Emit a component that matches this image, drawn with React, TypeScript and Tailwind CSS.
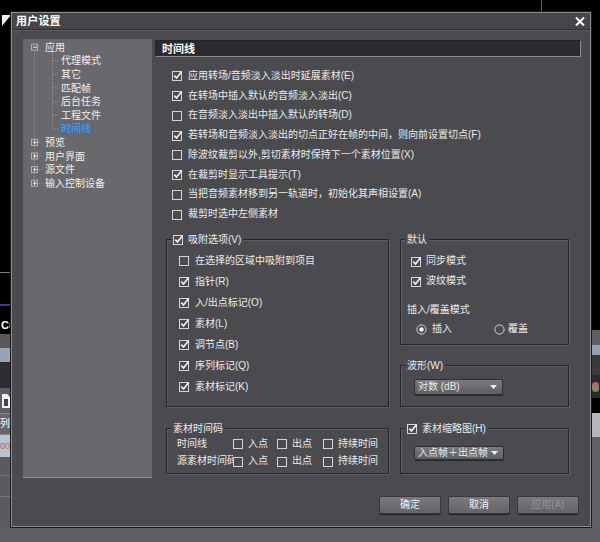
import React from "react";

function Check({ checked }: { checked: boolean }) {
  return (
    <svg width="11" height="11" viewBox="0 0 11 11" className="shrink-0">
      <rect x="0.5" y="1.5" width="9" height="9" fill="none" stroke="#d6d6d6" />
      {checked && (
        <path d="M2.3 5.6 L4.5 8.1 L9.7 1.4" fill="none" stroke="#f4f4f4" strokeWidth="1.6" />
      )}
    </svg>
  );
}

function Radio({ on }: { on: boolean }) {
  return (
    <svg width="11" height="11" viewBox="0 0 11 11" className="shrink-0">
      <circle cx="5.5" cy="5.5" r="4.6" fill="none" stroke="#d6d6d6" />
      {on && <circle cx="5.5" cy="5.5" r="2.2" fill="#f4f4f4" />}
    </svg>
  );
}

function Arrow() {
  return (
    <svg width="7" height="4" viewBox="0 0 7 4" className="shrink-0">
      <path d="M0 0 L7 0 L3.5 4 Z" fill="#f0f0f0" />
    </svg>
  );
}

function Row({ checked, text }: { checked: boolean; text: string }) {
  return (
    <div className="flex items-center h-[19.75px] gap-[5px] whitespace-nowrap">
      <Check checked={checked} />
      <span>{text}</span>
    </div>
  );
}

function Group({
  legend,
  className,
  children,
}: {
  legend: React.ReactNode;
  className: string;
  children?: React.ReactNode;
}) {
  return (
    <div
      className={`relative border border-[#262529] shadow-[inset_1px_1px_0_#5c5b60,1px_1px_0_#5c5b60] ${className}`}
    >
      <div className="absolute -top-[7px] left-[4px] px-[2px] bg-[#4b4a4f] flex items-center gap-[4px] h-[13px] whitespace-nowrap">
        {legend}
      </div>
      {children}
    </div>
  );
}

function Dropdown({ text, w, h }: { text: string; w: string; h: string }) {
  return (
    <div
      className={`flex items-center justify-between ${w} ${h} bg-gradient-to-b from-[#7b7a7f] to-[#5e5d62] border border-[#2f2e32] rounded-[2px] pl-[3px] pr-[5px] shadow-[0_1px_0_#2a292d] whitespace-nowrap`}
    >
      <span>{text}</span>
      <Arrow />
    </div>
  );
}

function Btn({ text, disabled }: { text: string; disabled?: boolean }) {
  return (
    <div
      className={`w-[62px] h-[18px] flex items-center justify-center rounded-[2px] border border-[#39383c] bg-gradient-to-b from-[#7a797e] to-[#646368] shadow-[0_1px_0_#1f1e22] ${
        disabled ? "text-[#939297]" : "text-[#f2f2f2]"
      }`}
    >
      {text}
    </div>
  );
}

function TreeLines() {
  const childYs = [61.3, 74.9, 88.5, 102.1, 115.7, 129.3];
  const rootPlus = [142.9, 156.5, 170.1, 183.7];
  const off = 39; // panel top
  const box = (cy: number, plus: boolean, k: string) => (
    <g key={k}>
      <rect x="8.5" y={cy - off - 3.5} width="6" height="6" fill="#69686d" stroke="#b4b4b8" />
      <line x1="10" y1={cy - off - 0.5} x2="14" y2={cy - off - 0.5} stroke="#e8e8e8" />
      {plus && <line x1="11.5" y1={cy - off - 2.5} x2="11.5" y2={cy - off + 1.5} stroke="#e8e8e8" />}
    </g>
  );
  return (
    <svg className="absolute left-0 top-0" width="129" height="200">
      <line x1="11.5" y1="13" x2="11.5" y2={183.7 - off} stroke="#909094" strokeDasharray="1 1" />
      <line x1="29.5" y1="14" x2="29.5" y2={129.3 - off} stroke="#909094" strokeDasharray="1 1" />
      {childYs.map((y, i) => (
        <line key={i} x1="30" y1={y - off - 0.5} x2="36" y2={y - off - 0.5} stroke="#909094" strokeDasharray="1 1" />
      ))}
      {rootPlus.map((y, i) => (
        <line key={"h" + i} x1="14" y1={y - off - 0.5} x2="19" y2={y - off - 0.5} stroke="#909094" strokeDasharray="1 1" />
      ))}
      {box(47.7, false, "a")}
      {rootPlus.map((y, i) => box(y, true, "b" + i))}
    </svg>
  );
}

export default function App() {
  const tree: { t: string; child?: boolean; sel?: boolean }[] = [
    { t: "应用" },
    { t: "代理模式", child: true },
    { t: "其它", child: true },
    { t: "匹配帧", child: true },
    { t: "后台任务", child: true },
    { t: "工程文件", child: true },
    { t: "时间线", child: true, sel: true },
    { t: "预览" },
    { t: "用户界面" },
    { t: "源文件" },
    { t: "输入控制设备" },
  ];

  return (
    <div className="relative w-[600px] h-[542px] bg-black overflow-hidden text-[10px] leading-[12px] text-[#ececec] font-['Liberation_Sans','Noto_Sans_CJK_SC',sans-serif]">
      {/* background application, left strip */}
      <div className="absolute left-0 top-0 w-[11px] h-[527px] flex flex-col">
        <div className="h-[272px] bg-black" />
        <div className="h-[1px] bg-[#7c7c80]" />
        <div className="h-[31px] bg-black" />
        <div className="h-[2px] bg-[#34408a]" />
        <div className="h-[28px] bg-black flex items-end pb-[3px] pl-[1px] text-[11px] font-bold text-white overflow-hidden">Cu</div>
        <div className="h-[14px] bg-[#58575c]" />
        <div className="h-[14px] bg-[#99a3b6]" />
        <div className="h-[26px] bg-[#2e2e31]" />
        <div className="h-[25px] bg-[#5d5c61] flex items-center pl-[2px]">
          <svg width="8" height="14" viewBox="0 0 8 14">
            <path d="M0 0 H5 L8 3 V14 H0 Z" fill="#f2f2f2" />
            <path d="M2 5 H6 V12 H2 Z" fill="#444" />
          </svg>
        </div>
        <div className="h-[22px] bg-[#66656a] border-y border-[#8a898e] flex items-center text-[10px] text-white overflow-hidden">列</div>
        <div className="h-[22px] bg-[#b9c3d2] flex items-center text-[9px] text-[#b06a5a] overflow-hidden">00</div>
        <div className="flex-1 bg-[#5b5a5f] flex flex-col gap-[20px] pt-[18px]">
          <div className="h-[1px] bg-[#77767b]" />
          <div className="h-[1px] bg-[#77767b]" />
        </div>
      </div>

      {/* background application, right strip */}
      <div className="absolute left-[592px] top-0 w-[8px] h-[527px] flex flex-col">
        <div className="h-[330px] bg-black" />
        <div className="h-[15px] bg-[#5e5d62]" />
        <div className="h-[10px] bg-[#98a0b0]" />
        <div className="h-[20px] bg-[#3a3a3d]" />
        <div className="h-[23px] bg-[#2a2a2c] flex items-center">
          <div className="w-[7px] h-[10px] rounded-full bg-gradient-to-b from-[#d04a6a] to-[#3aa05a]" />
        </div>
        <div className="h-[15px] bg-black" />
        <div className="h-[24px] bg-[#b6b6ba]" />
        <div className="flex-1 bg-[#606065]" />
      </div>

      <div className="absolute left-[541px] top-0 w-[1px] h-[12px] bg-[#2a6ad0]" />
      <div className="absolute left-0 top-[527px] w-full h-[15px] bg-[#5f5e63]" />
      <svg className="absolute left-[2px] top-[15px]" width="9" height="11" viewBox="0 0 9 11">
        <path d="M0 0 H9 L0 11 Z" fill="#f2f2f2" />
      </svg>

      {/* dialog */}
      <div className="absolute left-[11px] top-[12px] w-[580px] h-[515px] bg-[#4b4a4f] border border-[#8c8b90] shadow-[0_0_0_1px_#1a1a1c] flex flex-col">
        {/* title bar */}
        <div className="h-[17px] shrink-0 flex items-center justify-between pl-[4px] pr-[5px] bg-[#46454a] border-b border-[#2f2e32] shadow-[0_1px_0_#5c5b60]">
          <span className="text-[11px] font-bold text-white tracking-[0.2px]">用户设置</span>
          <svg width="10" height="9" viewBox="0 0 10 9">
            <path d="M1 0.5 L9 8.5 M9 0.5 L1 8.5" stroke="#ffffff" strokeWidth="2" />
          </svg>
        </div>

        <div className="flex-1 flex flex-col pl-[11px] pr-[9px] pt-[9px]">
          <div className="flex gap-[3px] h-[439px]">
            {/* tree */}
            <div className="relative w-[129px] h-full bg-[#69686d] border-b border-[#8e8d92] pt-[2px]">
              <TreeLines />
              <div className="relative flex flex-col">
                {tree.map((n) => (
                  <div
                    key={n.t}
                    className={`h-[13.6px] flex items-center whitespace-nowrap ${n.child ? "pl-[38px]" : "pl-[22px]"} ${
                      n.sel ? "text-[#4aa3ff] [text-shadow:0_0_3px_#1f6fe0]" : "text-[#f0f0f0]"
                    }`}
                  >
                    {n.t}
                  </div>
                ))}
              </div>
            </div>

            {/* right column */}
            <div className="w-[426px] pt-[1px] flex flex-col">
              <div className="h-[17px] bg-[#2b2a2e] border border-t-[#232226] border-l-[#232226] border-r-[#8a898e] border-b-[#8a898e] flex items-center pl-[6px]">
                <span className="text-[11px] font-bold text-white">时间线</span>
              </div>

              <div className="pl-[17px] mt-[9px] flex flex-col">
                <Row checked text="应用转场/音频淡入淡出时延展素材(E)" />
                <Row checked text="在转场中插入默认的音频淡入淡出(C)" />
                <Row checked={false} text="在音频淡入淡出中插入默认的转场(D)" />
                <Row checked text="若转场和音频淡入淡出的切点正好在帧的中间，则向前设置切点(F)" />
                <Row checked={false} text="除波纹裁剪以外,剪切素材时保持下一个素材位置(X)" />
                <Row checked text="在裁剪时显示工具提示(T)" />
                <Row checked={false} text="当把音频素材移到另一轨道时，初始化其声相设置(A)" />
                <Row checked={false} text="裁剪时选中左侧素材" />
              </div>

              <div className="pl-[11px] mt-[15px] flex gap-[11px]">
                {/* left groups */}
                <div className="w-[223px] flex flex-col gap-[21px]">
                  <Group
                    className="h-[168px] pl-[12px] pt-[10px]"
                    legend={
                      <>
                        <Check checked />
                        <span>吸附选项(V)</span>
                      </>
                    }
                  >
                    {[
                      [false, "在选择的区域中吸附到项目"],
                      [true, "指针(R)"],
                      [true, "入/出点标记(O)"],
                      [true, "素材(L)"],
                      [true, "调节点(B)"],
                      [true, "序列标记(Q)"],
                      [true, "素材标记(K)"],
                    ].map(([c, t]) => (
                      <div key={t as string} className="h-[21px] flex items-center gap-[5px] whitespace-nowrap">
                        <Check checked={c as boolean} />
                        <span>{t as string}</span>
                      </div>
                    ))}
                  </Group>

                  <Group className="h-[46px] pl-[10px] pt-[6px]" legend={<span>素材时间码</span>}>
                    {["时间线", "源素材时间码"].map((lbl) => (
                      <div key={lbl} className="h-[17.4px] grid grid-cols-[56px_44px_46px_auto] items-center">
                        <span className="overflow-hidden whitespace-nowrap">{lbl}</span>
                        <div className="flex items-center gap-[4px]">
                          <Check checked={false} />
                          <span>入点</span>
                        </div>
                        <div className="flex items-center gap-[4px]">
                          <Check checked={false} />
                          <span>出点</span>
                        </div>
                        <div className="flex items-center gap-[4px] whitespace-nowrap">
                          <Check checked={false} />
                          <span>持续时间</span>
                        </div>
                      </div>
                    ))}
                  </Group>
                </div>

                {/* right groups */}
                <div className="w-[169px] flex flex-col">
                  <Group className="h-[106px] pt-[11px]" legend={<span>默认</span>}>
                    <div className="pl-[10px]">
                      <div className="h-[20px] flex items-center gap-[4px]">
                        <Check checked />
                        <span>同步模式</span>
                      </div>
                      <div className="h-[20px] flex items-center gap-[4px]">
                        <Check checked />
                        <span>波纹模式</span>
                      </div>
                    </div>
                    <div className="pl-[6px] mt-[13px] h-[12px] flex items-center">插入/覆盖模式</div>
                    <div className="pl-[15px] mt-[6px] h-[14px] flex items-center">
                      <div className="w-[78px] flex items-center gap-[5px]">
                        <Radio on />
                        <span>插入</span>
                      </div>
                      <div className="flex items-center gap-[3px]">
                        <Radio on={false} />
                        <span>覆盖</span>
                      </div>
                    </div>
                  </Group>

                  <Group className="mt-[20px] h-[42px] pl-[13px] pt-[13px]" legend={<span>波形(W)</span>}>
                    <Dropdown text="对数 (dB)" w="w-[89px]" h="h-[16px]" />
                  </Group>

                  <Group
                    className="mt-[21px] h-[46px] pl-[13px] pt-[17px]"
                    legend={
                      <>
                        <Check checked />
                        <span>素材缩略图(H)</span>
                      </>
                    }
                  >
                    <Dropdown text="入点帧＋出点帧" w="w-[90px]" h="h-[14px]" />
                  </Group>
                </div>
              </div>
            </div>
          </div>

          <div className="mt-[18px] flex justify-end gap-[7px] pr-[2px]">
            <Btn text="确定" />
            <Btn text="取消" />
            <Btn text="应用(A)" disabled />
          </div>
        </div>
      </div>
    </div>
  );
}
